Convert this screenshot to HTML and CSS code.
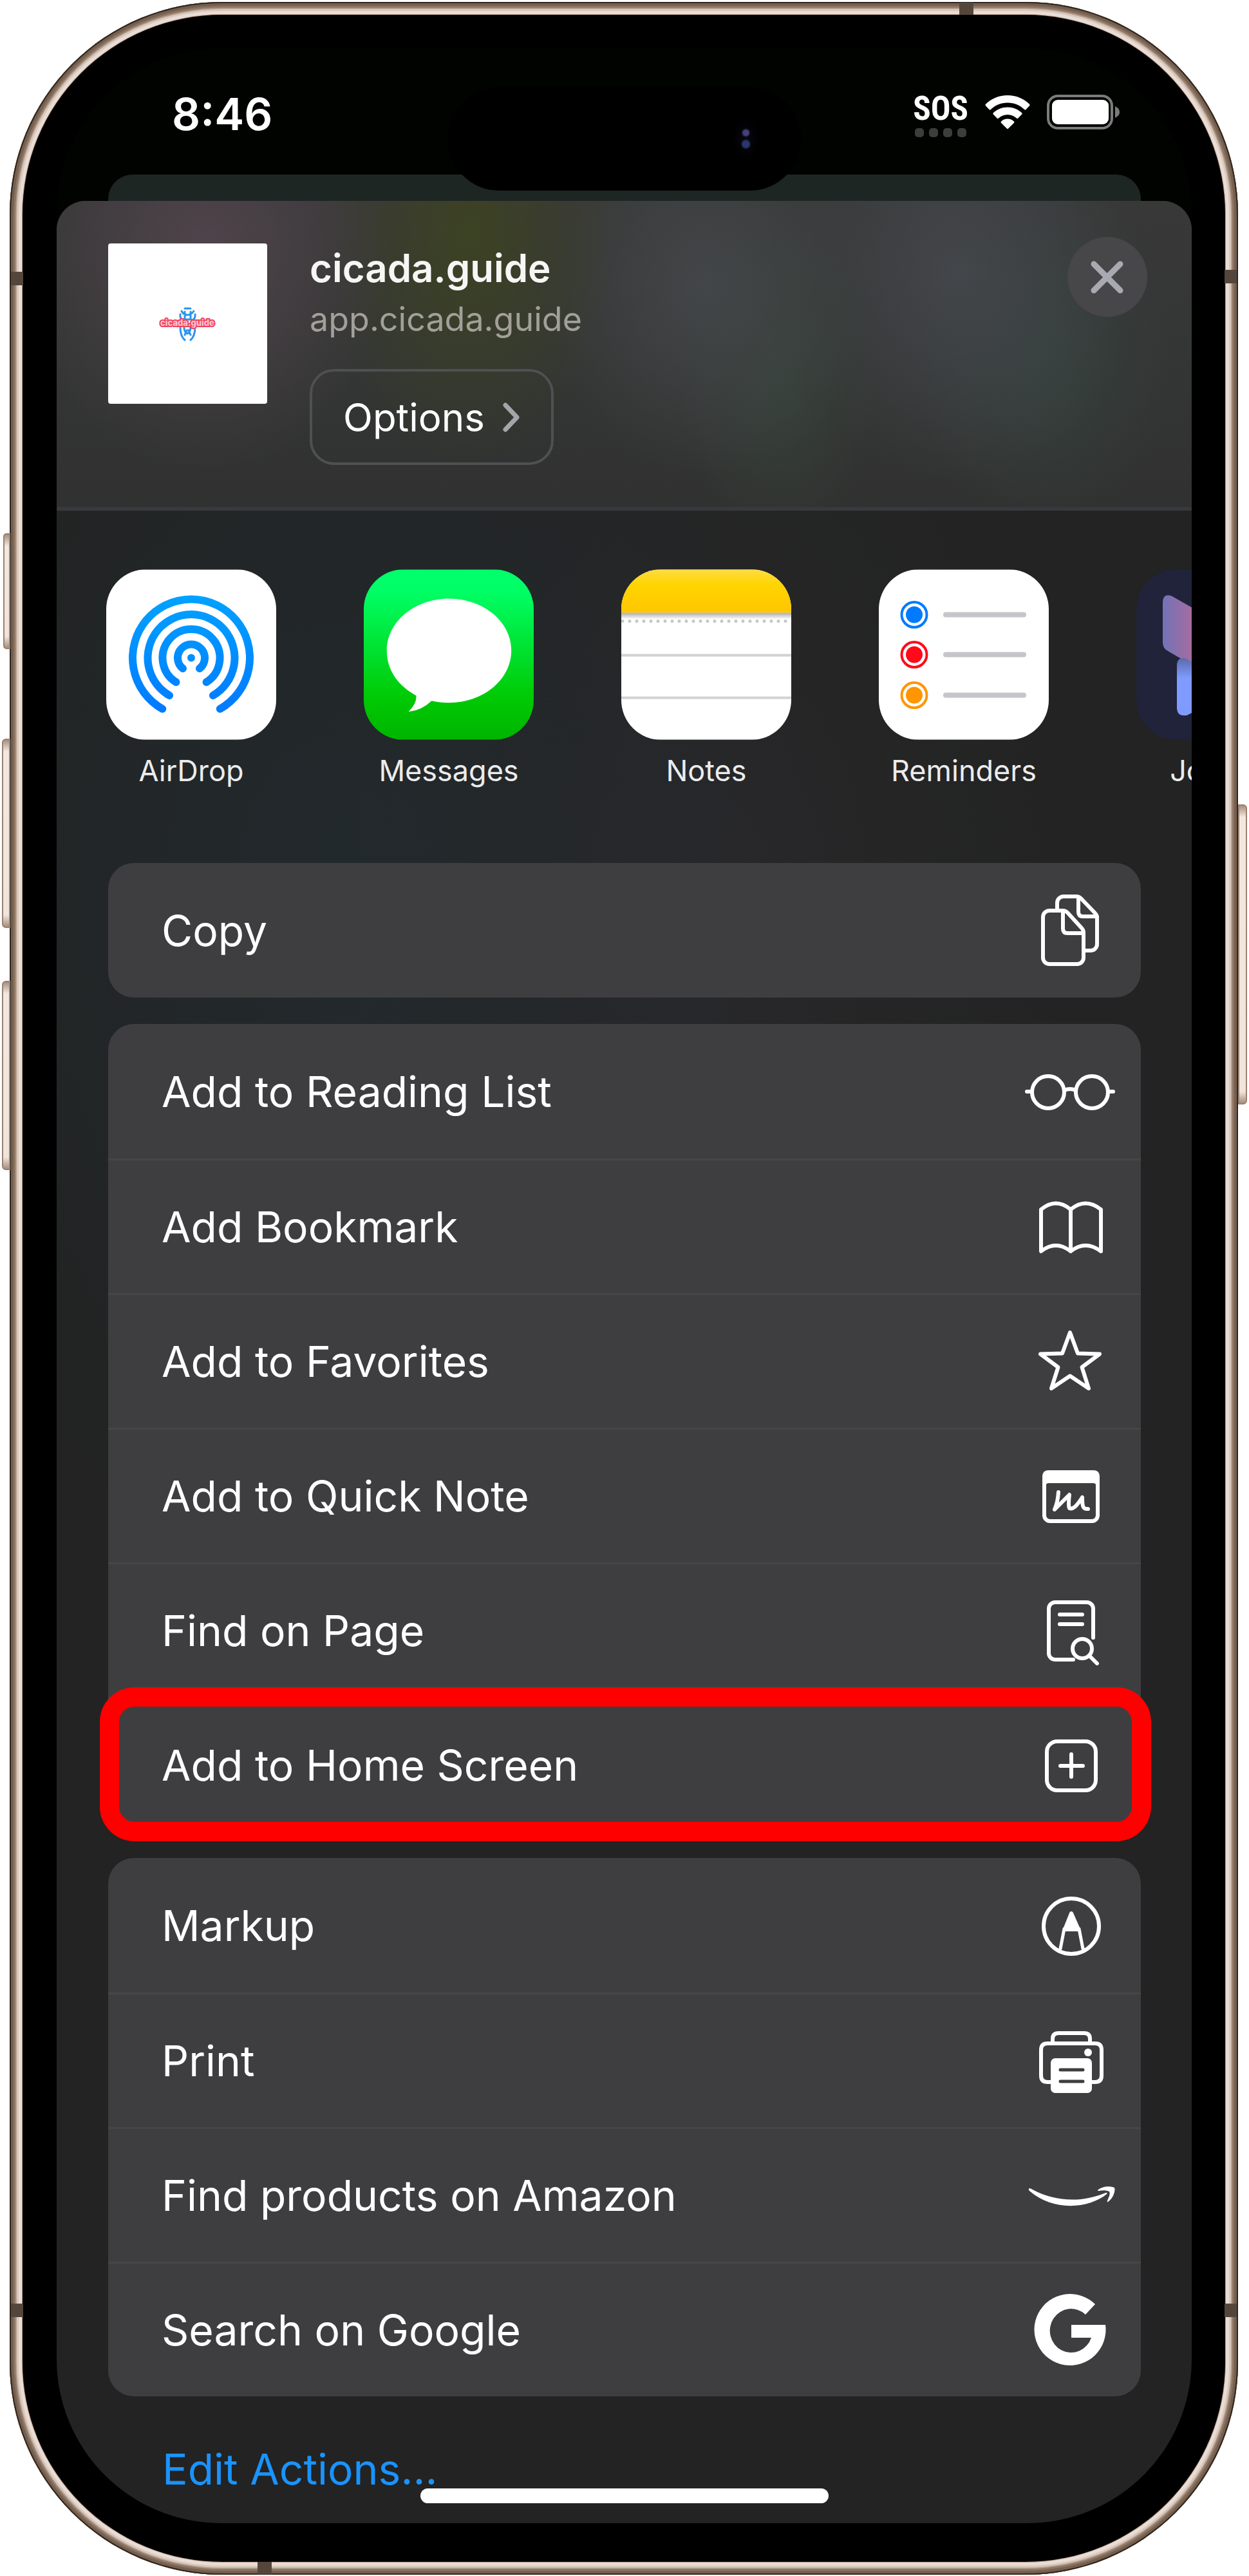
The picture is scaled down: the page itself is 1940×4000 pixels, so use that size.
FILE: index.html
```html
<!DOCTYPE html>
<html lang="en">
<head>
<meta charset="utf-8">
<meta name="viewport" content="width=device-width, initial-scale=1">
<title>Share cicada.guide</title>
<link rel="stylesheet" href="styles.css">
</head>
<body>
<main class="phone">
  <span class="side-button side-button--action"></span>
  <span class="side-button side-button--up"></span>
  <span class="side-button side-button--down"></span>
  <span class="side-button side-button--power"></span>
  <span class="band band--top"></span>
  <span class="band band--bottom"></span>
  <span class="band band--left-high"></span>
  <span class="band band--left-low"></span>
  <span class="band band--right-high"></span>
  <span class="band band--right-low"></span>

  <div class="screen">
    <div class="island"><span class="lens"></span></div>

    <header class="status">
      <time class="clock">8:46</time>
      <div class="signals">
        <div class="sos">
          <span class="sos-text">SOS</span>
          <span class="sos-dots"><i></i><i></i><i></i><i></i></span>
        </div>
        <svg class="wifi" viewBox="0 0 70 54" aria-label="Wi-Fi">
          <path fill="#fff" d="M35 1C21.500 1 9.500 6.300 1 14.800q-1.200 1.300 0 2.500l5.400 5.700q1.200 1.200 2.500 0C15.600 16.500 24.800 12.500 35 12.500s19.400 4 26.100 10.500q1.300 1.200 2.500 0l5.400-5.700q1.200-1.200 0-2.500C60.500 6.300 48.500 1 35 1zM35 19.500c-8.500 0-16.200 3.300-22 8.600q-1.300 1.300 0 2.600l5.600 5.800q1.200 1.200 2.500 0c3.700-3.400 8.500-5.500 13.900-5.500s10.200 2.100 13.900 5.500q1.300 1.200 2.500 0l5.600-5.800q1.300-1.300 0-2.600c-5.800-5.300-13.500-8.600-22-8.600zM35 37.500c-3.800 0-7.300 1.500-9.800 4q-1.200 1.200 0 2.500l8.600 8.600q1.200 1.200 2.400 0l8.600-8.600q1.200-1.300 0-2.500c-2.500-2.500-6-4-9.800-4z"/>
        </svg>
        <svg class="battery" viewBox="0 0 113 54" aria-label="Battery">
          <rect x="2" y="2" width="99" height="50" rx="15" fill="none" stroke="#7a7b7a" stroke-width="4"/>
          <rect x="8" y="8" width="88" height="38" rx="9" fill="#fff"/>
          <path d="M106 18q7 3 7 9t-7 9z" fill="#7a7b7a"/>
        </svg>
      </div>
    </header>
    <div class="back-card"></div>

    <section class="sheet">
      <div class="sheet-head">
        <svg class="thumb" viewBox="0 0 247 249" aria-label="cicada.guide logo">
          <rect width="247" height="249" rx="4" fill="#fff"/>
          <g fill="none" stroke="#2a95ee" stroke-width="3" stroke-linecap="round">
            <path d="M119 101h9M114 105q3 6 9 6t10-6M112 110q-1 6 4 9M135 110q1 6-4 9M119 106v10M128 106v10M118 118h11"/>
            <path d="M112 130q0 14 7 20M135 130q0 14-7 20M118 130q0 8 5 10 5-2 5-10M119 142l3-7h3l3 7"/>
          </g>
          <text x="123" y="128" class="thumb-name">cicada.guide</text>
        </svg>
        <div class="site">
          <h1 class="site-title">cicada.guide</h1>
          <p class="site-url">app.cicada.guide</p>
          <button class="options" type="button">Options
            <svg class="chevron" viewBox="0 0 28 46"><path d="M5 4l18 19L5 42" fill="none" stroke="#a4a5a9" stroke-width="7" stroke-linecap="round" stroke-linejoin="round"/></svg>
          </button>
        </div>
        <button class="close" type="button" aria-label="Close">
          <svg viewBox="0 0 124 124"><path d="M41 42l41 41M82 42L41 83" stroke="#a9aab1" stroke-width="9" stroke-linecap="round"/></svg>
        </button>
      </div>

      <nav class="apps" aria-label="Share with an app">
        <button class="app" type="button">
          <svg class="app-icon" viewBox="0 0 264 264">
            <defs><linearGradient id="air" gradientUnits="userSpaceOnUse" x1="0" y1="40" x2="0" y2="222"><stop offset="0" stop-color="#00a2ff"/><stop offset="1" stop-color="#007aff"/></linearGradient></defs>
            <rect width="264" height="264" fill="#fff"/>
            <g fill="none" stroke="url(#air)" stroke-width="12" stroke-linecap="round">
              <path d="M87.200 216.200a91 91 0 1 1 89.600 0"/>
              <path d="M98 195.400a67.500 67.500 0 1 1 68 0"/>
              <path d="M108.400 174.700a44.500 44.500 0 1 1 47.200 0"/>
              <path d="M119 153.500a21 21 0 1 1 26 0"/>
            </g>
            <circle cx="132" cy="137" r="6" fill="#0091ff"/>
          </svg>
          <span class="app-name">AirDrop</span>
        </button>
        <button class="app" type="button">
          <svg class="app-icon" viewBox="0 0 264 264">
            <defs><linearGradient id="msg" x1="0" y1="0" x2="0" y2="1"><stop offset="0" stop-color="#00ff6c"/><stop offset=".12" stop-color="#00ff66"/><stop offset=".75" stop-color="#00ca04"/><stop offset="1" stop-color="#00b400"/></linearGradient></defs>
            <rect width="264" height="264" fill="url(#msg)"/>
            <path fill="#fff" d="M132.500 45c53.400 0 96.700 36.100 96.700 80.700s-43.300 81-96.700 81q-15 0-27-3-16 15-36 17 13-13 12-25C53 180 35.800 156 35.800 125.700 35.800 81.100 79.100 45 132.500 45z"/>
          </svg>
          <span class="app-name">Messages</span>
        </button>
        <button class="app" type="button">
          <svg class="app-icon" viewBox="0 0 264 264">
            <defs>
              <linearGradient id="pad" x1="0" y1="0" x2="0" y2="1"><stop offset="0" stop-color="#ffdc43"/><stop offset=".35" stop-color="#ffd400"/><stop offset="1" stop-color="#ffc600"/></linearGradient>
              <linearGradient id="padshade" x1="0" y1="0" x2="0" y2="1"><stop offset="0" stop-color="#aaa"/><stop offset="1" stop-color="#fff"/></linearGradient>
            </defs>
            <rect width="264" height="264" fill="#fff"/>
            <rect width="264" height="67" fill="url(#pad)"/>
            <rect y="67" width="264" height="10" fill="url(#padshade)"/>
            <path d="M2 80h264" stroke="#c6c6c6" stroke-width="5" stroke-linecap="round" stroke-dasharray="0 11"/>
            <path d="M0 133h264M0 199h264" stroke="#d2d2d2" stroke-width="4"/>
          </svg>
          <span class="app-name">Notes</span>
        </button>
        <button class="app" type="button">
          <svg class="app-icon" viewBox="0 0 264 264">
            <rect width="264" height="264" fill="#fff"/>
            <g fill="none" stroke-width="4"><circle cx="55" cy="70" r="19.500" stroke="#007aff"/><circle cx="55" cy="132" r="19.500" stroke="#ff0a1a"/><circle cx="55" cy="195" r="19.500" stroke="#ff9500"/></g>
            <circle cx="55" cy="70" r="13" fill="#007aff"/><circle cx="55" cy="132" r="13" fill="#ff0a1a"/><circle cx="55" cy="195" r="13" fill="#ff9500"/>
            <path d="M104 70h121M104 132h121M104 195h121" stroke="#c5c5ca" stroke-width="8" stroke-linecap="round"/>
          </svg>
          <span class="app-name">Reminders</span>
        </button>
        <button class="app" type="button">
          <svg class="app-icon" viewBox="0 0 264 264">
            <defs>
              <linearGradient id="wing" x1="0" y1="0" x2="1" y2="0"><stop offset="0" stop-color="#7273b8"/><stop offset=".5" stop-color="#a56c9f"/><stop offset="1" stop-color="#e8707f"/></linearGradient>
              <linearGradient id="leaf" x1="0" y1="0" x2="0" y2="1"><stop offset="0" stop-color="#5b6aa8"/><stop offset=".35" stop-color="#809bff"/></linearGradient>
            </defs>
            <rect width="264" height="264" fill="#20233a"/>
            <path fill="url(#wing)" d="M41 52q0-16 14-11l77 44v90L50 127q-9-4-9-14z"/>
            <path fill="url(#leaf)" d="M63 149q0-14 14-11l55 32v30l-53 26q-16 3-16-12z"/>
          </svg>
          <span class="app-name">Journal</span>
        </button>
      </nav>

      <div class="actions">
        <div class="group">
          <button class="row" type="button">Copy
            <svg class="icon" viewBox="0 0 150 120"><path d="M63 29H42a10 10 0 0 0-10 10v63a10 10 0 0 0 10 10h43a10 10 0 0 0 10-10V63q0-4-3-7L70 32q-3-3-7-3zM63 30v27q0 7 7 7h25M54 26V17a10 10 0 0 1 10-10h20q4 0 7 3l22 23q3 3 3 7v41a10 10 0 0 1-10 10H98M87 8v23q0 7 7 7h22"/></svg>
          </button>
        </div>

        <div class="group">
          <button class="row" type="button">Add to Reading List
            <svg class="icon" viewBox="0 0 150 120"><circle cx="40" cy="61" r="25"/><circle cx="108" cy="61" r="25"/><path d="M65 58q9-4 18 0M7 60h8M133 60h8"/></svg>
          </button>
          <button class="row" type="button">Add Bookmark
            <svg class="icon" viewBox="0 0 150 120"><path d="M29 98V33q23-19 46 0 23-19 47 0v65q-24-18-47 0-23-18-46 0zM75 33v65"/></svg>
          </button>
          <button class="row" type="button">Add to Favorites
            <svg class="icon" viewBox="0 0 150 120"><path d="M74 15l12 32.500 34 1L92.500 69 103 102 74 82.500 45 102 55.500 69 28 48.500l34-1z"/></svg>
          </button>
          <button class="row" type="button">Add to Quick Note
            <svg class="icon" viewBox="0 0 150 120"><rect x="34" y="23" width="83" height="76" rx="9"/><path class="solid" d="M34 41V30q0-7 7-7h69q7 0 7 7v11q-2-4-7-4H41q-5 0-7 4z"/><path d="M56 54q-1 16-6 27l23-23q-2 16 0 21c7 3 15-9 20-17 0 14 1 19 9 18"/></svg>
          </button>
          <button class="row" type="button">Find on Page
            <svg class="icon" viewBox="0 0 150 120"><path d="M79 105H51a10 10 0 0 1-10-10V26a10 10 0 0 1 10-10h49a10 10 0 0 1 10 10v45M58 35h35M58 50h35M104 99l12 12"/><circle cx="93" cy="88" r="15"/></svg>
          </button>
          <button class="row row--marked" type="button">Add to Home Screen
            <svg class="icon" viewBox="0 0 150 120"><rect x="38" y="23" width="76" height="76" rx="16"/><path d="M59 61h35M76 43v35"/></svg>
          </button>
        </div>

        <div class="group">
          <button class="row" type="button">Markup
            <svg class="icon" viewBox="0 0 150 120"><circle cx="76" cy="61" r="43"/><path class="thin" d="M59 96l6-31h23l6 31"/><path class="solid" d="M76 41L66 66h21z"/></svg>
          </button>
          <button class="row" type="button">Print
            <svg class="icon" viewBox="0 0 150 120"><path d="M47 30v-4q0-9 9-9h40q9 0 9 9v4M46 93h-7q-10 0-10-10V43q0-10 10-10h74q10 0 10 10v40q0 10-10 10h-7"/><rect class="fill" x="44" y="56" width="64" height="54" rx="7"/><circle class="fill" cx="102" cy="47" r="6"/><path class="slot" d="M59 74h35M59 92h35"/></svg>
          </button>
          <button class="row" type="button">Find products on Amazon
            <svg class="icon" viewBox="0 0 150 120"><path class="fill" d="M10 50q1-2 4 0c38 21 80 21 115 6q4-1 2 2c-30 24-85 26-120-5q-2-2-1-3zM117 52c6-6 19-7 26-4 2 4-2 17-10 22q-2 1-1-2c2-5 5-10 3-14-4-2-10-2-17-1q-2 0-1-1z"/></svg>
          </button>
          <button class="row" type="button">Search on Google
            <svg class="icon" viewBox="0 0 150 120"><path class="fill" d="M113 20A55.500 55.500 0 1 0 129 52H76V72H107A33 34 0 1 1 98 36z"/></svg>
          </button>
        </div>
        <a class="edit" href="#edit">Edit Actions…</a>
      </div>
    </section>
    <span class="home-bar"></span>
  </div>
</main>
</body>
</html>
```
FILE: styles.css
```css
* { box-sizing: border-box; }

body {
  margin: 0;
  background: #fff;
  color: #fff;
  font-family: Inter, "Liberation Sans", sans-serif;
}

button {
  border: 0;
  padding: 0;
  background: none;
  color: inherit;
  font: inherit;
  text-align: left;
}

svg { display: block; flex: none; }

/* phone body */
.phone {
  position: relative;
  margin: 3px 17px 3px 15px;
  padding: 72px 72px 80px 73px;
  border-radius: 330px;
  background: #000;
  box-shadow:
    inset 0 0 0 2px #30271f,
    inset 0 0 0 6px #755f4f,
    inset 0 0 0 9px #8d7563,
    inset 0 0 0 11px #b29c8d,
    inset 0 0 0 14px #d8c8bd,
    inset 0 0 0 19px #e9dcd4,
    inset 0 0 0 20px #b89b89;
}

.side-button {
  position: absolute;
  width: 13px;
  border: 2px solid #9a8270;
  background: linear-gradient(#a68e7f, #f3e8e1 18px, #f0e4dc calc(100% - 18px), #a68e7f);
}
.side-button--action { left: -10px; top: 825px; height: 180px; border-radius: 5px 0 0 5px; width: 11px; }
.side-button--up { left: -12px; top: 1144px; height: 294px; border-radius: 6px 0 0 6px; }
.side-button--down { left: -12px; top: 1520px; height: 294px; border-radius: 6px 0 0 6px; }
.side-button--power { right: -14px; top: 1246px; height: 466px; width: 14px; border-radius: 0 6px 6px 0; }

.band { position: absolute; background: #54463b; }
.band--top { top: 1px; right: 411px; width: 22px; height: 19px; }
.band--bottom { bottom: 1px; left: 385px; width: 22px; height: 19px; }
.band--left-high { left: 2px; top: 419px; width: 19px; height: 21px; }
.band--left-low { left: 2px; bottom: 400px; width: 19px; height: 21px; }
.band--right-high { right: 2px; top: 416px; width: 19px; height: 21px; }
.band--right-low { right: 2px; bottom: 400px; width: 19px; height: 21px; }

.screen {
  position: relative;
  display: flex;
  flex-direction: column;
  overflow: hidden;
  border-radius: 255px;
  background: #010301;
}

/* status area */
.island {
  position: absolute;
  z-index: 1;
  top: 60px;
  left: 50%;
  width: 549px;
  height: 161px;
  transform: translateX(-50%);
  border-radius: 80px;
  background: #000;
}
.lens {
  position: absolute;
  right: 66px;
  top: 46px;
  width: 40px;
  height: 68px;
  background:
    radial-gradient(circle at 50% 37%, #43407c 0, #43407c 4px, transparent 7px),
    radial-gradient(circle at 50% 63%, #29356b 0, #29356b 5px, transparent 8px),
    radial-gradient(ellipse, #080812, transparent 70%);
}

.status {
  display: flex;
  justify-content: space-between;
  align-items: flex-start;
  height: 196px;
  padding: 58px 112px 0 179px;
}
.clock { font-size: 69px; font-weight: 600; line-height: 88px; }
.signals { display: flex; gap: 26px; padding-top: 14px; }
.sos { display: flex; flex-direction: column; align-items: center; gap: 8px; }
.sos-text {
  font-family: "Liberation Sans Narrow", "Roboto Condensed", Roboto, sans-serif;
  font-size: 51px;
  font-weight: 700;
  line-height: 44px;
}
.sos-dots { display: flex; gap: 8px; }
.sos-dots i { width: 14px; height: 14px; border-radius: 5px; background: #3c3d3c; }
.wifi { width: 70px; height: 54px; }
.battery { width: 113px; height: 54px; }

.back-card {
  height: 41px;
  margin: 0 79px 0 80px;
  border-radius: 38px 38px 0 0;
  background: #1e2624;
}

/* share sheet */
.sheet {
  border-radius: 45px 45px 0 0;
  overflow: hidden;
  background:
    radial-gradient(ellipse 700px 1100px at 25% 30%, #22292d, transparent),
    radial-gradient(ellipse 600px 900px at 55% 30%, #29282b, transparent),
    #222322;
}
.sheet-head {
  display: flex;
  align-items: flex-start;
  padding: 56px 69px 65px 80px;
  border-bottom: 6px solid #37393c;
  background:
    radial-gradient(ellipse 290px 340px at 230px 80px, #4f444b, transparent),
    radial-gradient(ellipse 230px 360px at 640px 50px, #3c4223, transparent),
    radial-gradient(ellipse 260px 300px at 1010px 130px, #434648, transparent),
    radial-gradient(ellipse 160px 280px at 1120px 260px, #36413a, transparent),
    radial-gradient(ellipse 270px 330px at 1400px 110px, #43464a, transparent),
    radial-gradient(ellipse 200px 280px at 1530px 240px, #35403c, transparent),
    linear-gradient(#383838, #343635 50%, #303130);
}
.thumb { width: 247px; height: 249px; margin-top: 10px; }
.thumb-name {
  font-size: 13px;
  font-weight: 800;
  text-anchor: middle;
  fill: #ffc4cf;
  stroke: #f0445f;
  stroke-width: 4px;
  paint-order: stroke;
}
.site {
  display: flex;
  flex-direction: column;
  align-items: flex-start;
  flex: 1;
  margin-left: 66px;
  padding-top: 10px;
}
.site-title { margin: 0; font-size: 60px; font-weight: 600; line-height: 76px; color: #f6f6f5; }
.site-url {
  margin: 4px 0 40px;
  font-size: 52px;
  line-height: 75px;
  color: #a2a098;
}
.options {
  display: flex;
  align-items: center;
  gap: 27px;
  height: 149px;
  padding: 0 48px;
  border: 4px solid #4f5053;
  border-radius: 38px;
  font-size: 60px;
}
.chevron { width: 28px; height: 46px; }
.close { width: 124px; height: 124px; border-radius: 50%; background: #474749; }

.apps {
  display: flex;
  gap: 136px;
  overflow: hidden;
  padding: 91px 0 0 77px;
}
.app { flex: none; width: 264px; text-align: center; }
.app-icon { width: 264px; height: 265px; border-radius: 62px; }
.app-name { display: block; margin-top: 20px; font-size: 45px; line-height: 56px; color: #ececec; }

.actions {
  display: flex;
  flex-direction: column;
  gap: 41px;
  padding: 115px 79px 0 80px;
}
.group { border-radius: 40px; background: #3e3e40; }
.row {
  position: relative;
  display: flex;
  align-items: center;
  justify-content: space-between;
  width: 100%;
  height: 209px;
  padding: 0 34px 0 83px;
  font-size: 66px;
}
.row + .row { border-top: 3px solid #464648; }
.row--marked::after {
  content: "";
  position: absolute;
  inset: -18px -16px -15px -13px;
  border: 30px solid #f00;
  border-radius: 54px;
}

.icon {
  width: 150px;
  height: 120px;
  fill: none;
  stroke: #fff;
  stroke-width: 6px;
  stroke-linecap: round;
  stroke-linejoin: round;
}
.icon .solid { fill: #fff; }
.icon .fill { fill: #fff; stroke: none; }
.icon .thin { stroke-width: 5px; }
.icon .slot { stroke: #3e3e40; stroke-width: 5px; }

.edit {
  padding: 31px 0 43px 84px;
  font-size: 66px;
  line-height: 82px;
  color: #1a93ff;
  text-decoration: none;
}

.home-bar {
  position: absolute;
  left: 50%;
  bottom: 31px;
  width: 634px;
  height: 23px;
  transform: translateX(-50%);
  border-radius: 12px;
  background: #fff;
}
```
